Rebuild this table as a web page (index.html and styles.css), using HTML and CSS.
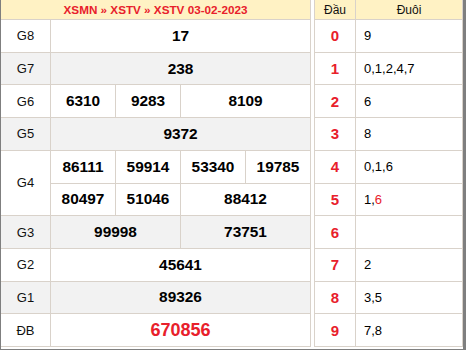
FILE: index.html
```html
<!DOCTYPE html>
<html lang="vi">
<head>
<meta charset="utf-8">
<title>XSTV 03-02-2023</title>
<link rel="stylesheet" href="styles.css">
</head>
<body>
<div class="frame">
  <div class="prizes">
    <div class="head title">XSMN » XSTV » XSTV 03-02-2023</div>

    <div class="lbl">G8</div>
    <div class="num s4">17</div>

    <div class="lbl alt">G7</div>
    <div class="num s4 alt">238</div>

    <div class="lbl">G6</div>
    <div class="num">6310</div>
    <div class="num">9283</div>
    <div class="num s2">8109</div>

    <div class="lbl alt">G5</div>
    <div class="num s4 alt">9372</div>

    <div class="lbl r2">G4</div>
    <div class="num">86111</div>
    <div class="num">59914</div>
    <div class="num">53340</div>
    <div class="num">19785</div>
    <div class="num">80497</div>
    <div class="num">51046</div>
    <div class="num s2">88412</div>

    <div class="lbl alt">G3</div>
    <div class="num s2 alt">99998</div>
    <div class="num s2 alt">73751</div>

    <div class="lbl">G2</div>
    <div class="num s4">45641</div>

    <div class="lbl alt">G1</div>
    <div class="num s4 alt">89326</div>

    <div class="lbl">ĐB</div>
    <div class="num s4 special">670856</div>
  </div>

  <div class="loto">
    <div class="head">Đầu</div>
    <div class="head">Đuôi</div>

    <div class="d">0</div><div class="t">9</div>
    <div class="d">1</div><div class="t">0,1,2,4,7</div>
    <div class="d">2</div><div class="t">6</div>
    <div class="d">3</div><div class="t">8</div>
    <div class="d">4</div><div class="t">0,1,6</div>
    <div class="d">5</div><div class="t">1,<span class="red">6</span></div>
    <div class="d">6</div><div class="t"></div>
    <div class="d">7</div><div class="t">2</div>
    <div class="d">8</div><div class="t">3,5</div>
    <div class="d">9</div><div class="t">7,8</div>
  </div>
</div>
</body>
</html>
```

FILE: styles.css
```css
* { box-sizing: border-box; }

html, body {
  margin: 0;
  padding: 0;
  background: #ffffff;
}

body {
  font-family: "Liberation Sans", Arial, sans-serif;
  color: #000;
}

.frame {
  width: 466px;
  height: 350px;
  border-left: 1px solid #7f7f7f;
  border-right: 3px solid #7f7f7f;
  border-bottom: 1px solid #7f7f7f;
  display: flex;
  gap: 3px;
  align-items: flex-start;
}

.prizes,
.loto {
  display: grid;
  gap: 1px;
  background: #d9d2ca;
  height: 347px;
  padding-bottom: 1px;
  grid-template-rows: 19px repeat(10, 1fr);
}

.prizes {
  width: 310px;
  padding-right: 1px;
  grid-template-columns: 49px repeat(4, 1fr);
}

.loto {
  width: 149px;
  padding-left: 1px;
  padding-right: 1px;
  grid-template-columns: 40px 1fr;
}

.prizes > div,
.loto > div {
  background: #ffffff;
  display: flex;
  align-items: center;
  justify-content: center;
}

.prizes > .alt { background: #f2f2f2; }

.head {
  background: #fff2c4 !important;
  font-size: 12px;
  color: #111;
}

.title {
  grid-column: 1 / -1;
  color: #e8202b;
  font-weight: bold;
  font-size: 11.7px;
}

.lbl {
  font-size: 13px;
  color: #111;
}

.r2 { grid-row: span 2; }

.num {
  font-weight: bold;
  font-size: 15.4px;
}

.s2 { grid-column: span 2; }
.s4 { grid-column: span 4; }

.special {
  color: #e8202b;
  font-size: 18px;
}

.d {
  color: #e8202b;
  font-weight: bold;
  font-size: 15px;
}

.loto > .t {
  justify-content: flex-start;
  padding-left: 8px;
  font-size: 13px;
}

.red { color: #e8202b; }
```
